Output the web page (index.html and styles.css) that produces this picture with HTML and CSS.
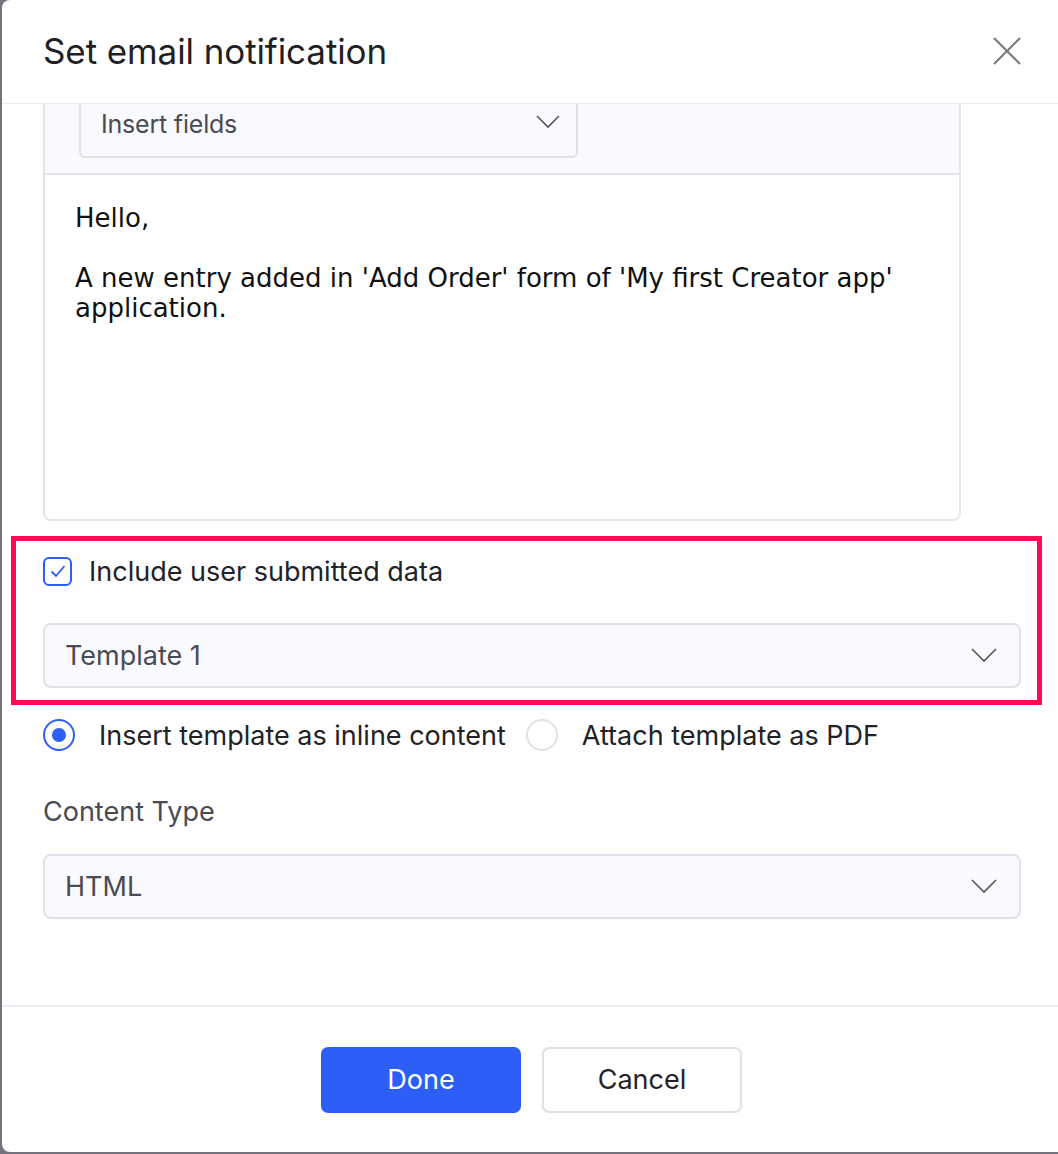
FILE: index.html
```html
<!DOCTYPE html>
<html>
<head>
<meta charset="utf-8">
<link rel="stylesheet" href="styles.css">
</head>
<body>
<div class="dialog">
  <div class="header">
    <h1 class="title">Set email notification</h1>
    <svg class="close" width="30" height="30" viewBox="0 0 30 30"><path d="M2 2 L28 28 M28 2 L2 28" stroke="#7a7a82" stroke-width="2.2" fill="none"/></svg>
  </div>
  <div class="body">
    <div class="editor">
      <div class="toolbar">
        <div class="fields-select">
          <span>Insert fields</span>
          <svg class="chev" width="24" height="14" viewBox="0 0 24 14"><path d="M1 1 L12 12 L23 1" stroke="#55555f" stroke-width="1.6" fill="none"/></svg>
        </div>
      </div>
      <div class="content">
        <p>Hello,</p>
        <p>&nbsp;</p>
        <p>A new entry added in 'Add Order' form of 'My first Creator app' application.</p>
      </div>
    </div>
    <div class="highlight">
      <label class="check-row">
        <span class="checkbox"><svg width="16" height="14" viewBox="0 0 16 14"><path d="M1.5 7.5 L6 12 L14.5 2" stroke="#2b5ff6" stroke-width="1.8" fill="none"/></svg></span>
        <span>Include user submitted data</span>
      </label>
      <div class="select">
        <span>Template 1</span>
        <svg class="chev" width="26" height="15" viewBox="0 0 26 15"><path d="M1 1 L13 13 L25 1" stroke="#55555f" stroke-width="1.6" fill="none"/></svg>
      </div>
    </div>
    <div class="radio-row">
      <label class="radio-opt"><span class="radio on"></span><span>Insert template as inline content</span></label>
      <label class="radio-opt"><span class="radio"></span><span>Attach template as PDF</span></label>
    </div>
    <div class="field-label">Content Type</div>
    <div class="select">
      <span>HTML</span>
      <svg class="chev" width="26" height="15" viewBox="0 0 26 15"><path d="M1 1 L13 13 L25 1" stroke="#55555f" stroke-width="1.6" fill="none"/></svg>
    </div>
  </div>
  <div class="footer">
    <button class="btn primary">Done</button>
    <button class="btn secondary">Cancel</button>
  </div>
</div>
</body>
</html>
```
FILE: styles.css
```css
* { box-sizing: border-box; }
html, body { margin: 0; padding: 0; }
body {
  background: #74747e;
  height: 1154px;
  overflow: hidden;
  font-family: Inter, "Noto Sans", sans-serif;
}
.dialog {
  margin-left: 2px;
  width: 1056px;
  height: 1152px;
  background: #fff;
  border-radius: 8px 0 0 8px;
  display: flex;
  flex-direction: column;
  overflow: hidden;
}
.header {
  height: 104px;
  flex: none;
  border-bottom: 1px solid #ebebf1;
  display: flex;
  align-items: center;
  justify-content: space-between;
  padding: 0 36px 0 41px;
}
.title {
  margin: 0;
  font-weight: 400;
  font-size: 35px;
  color: #1f1f24;
  letter-spacing: -0.1px;
  position: relative;
  top: -1px;
}
.close { display: block; margin-top: -2px; }
.body {
  flex: 1;
  overflow: hidden;
  padding: 0 37px 0 41px;
}
.editor {
  margin-top: -20px;
  width: 918px;
  height: 437px;
  border: 2px solid #e4e4eb;
  border-radius: 8px;
  display: flex;
  flex-direction: column;
}
.toolbar {
  background: #f9fafd;
  border-bottom: 2px solid #e4e4eb;
  padding: 0 0 15px 34px;
  border-radius: 6px 6px 0 0;
}
.fields-select {
  width: 499px;
  height: 72px;
  border: 2px solid #e0e0e8;
  border-radius: 6px;
  background: #f9fafd;
  display: flex;
  align-items: flex-end;
  justify-content: space-between;
  padding: 0 16px 17px 20px;
  font-size: 25px;
  letter-spacing: -0.2px;
  color: #4a4a55;
}
.fields-select .chev { margin-bottom: 10px; }
.content {
  padding: 28px 30px 0 30px;
  font-family: "DejaVu Sans", sans-serif;
  font-size: 26px;
  line-height: 30px;
  color: #111;
}
.content p { margin: 0; }
.highlight {
  margin: 15px -21px 0 -32px;
  border: 5px solid #ff0a55;
  padding: 15px 16px 12px 27px;
}
.check-row {
  display: flex;
  align-items: center;
  gap: 17px;
  height: 30px;
  font-size: 27px;
  color: #222226;
}
.checkbox {
  width: 29px;
  height: 29px;
  border: 2px solid #2b5ff6;
  border-radius: 6px;
  display: flex;
  align-items: center;
  justify-content: center;
}
.select {
  margin-top: 37px;
  height: 65px;
  border: 2px solid #e0e0e8;
  border-radius: 8px;
  background: #f9fafd;
  display: flex;
  align-items: center;
  justify-content: space-between;
  padding: 0 22px 0 20px;
  font-size: 27px;
  color: #4a4a55;
}
.radio-row {
  margin-top: 14px;
  display: flex;
  align-items: center;
  gap: 20px;
  height: 32px;
  font-size: 27px;
  color: #222226;
}
.radio-opt {
  display: flex;
  align-items: center;
  gap: 24px;
}
.radio {
  width: 32px;
  height: 32px;
  border-radius: 50%;
  border: 2px solid #e0e0e8;
  display: flex;
  align-items: center;
  justify-content: center;
}
.radio.on { border-color: #2b5ff6; }
.radio.on::after {
  content: "";
  width: 14px;
  height: 14px;
  border-radius: 50%;
  background: #2b5ff6;
}
.field-label {
  margin-top: 46px;
  height: 30px;
  line-height: 30px;
  font-size: 27px;
  color: #4a4a55;
}
.field-label + .select { margin-top: 27px; }
.footer {
  flex: none;
  height: 147px;
  border-top: 2px solid #ededf2;
  display: flex;
  align-items: center;
  justify-content: center;
  gap: 21px;
  padding-left: 3px;
}
.btn {
  width: 200px;
  height: 66px;
  border-radius: 7px;
  font-family: Inter, "Noto Sans", sans-serif;
  font-size: 27px;
  cursor: pointer;
}
.btn.primary {
  background: #2b5ff7;
  color: #fff;
  border: none;
}
.btn.secondary {
  background: #fff;
  color: #222226;
  border: 2px solid #e0e0e8;
}
```
